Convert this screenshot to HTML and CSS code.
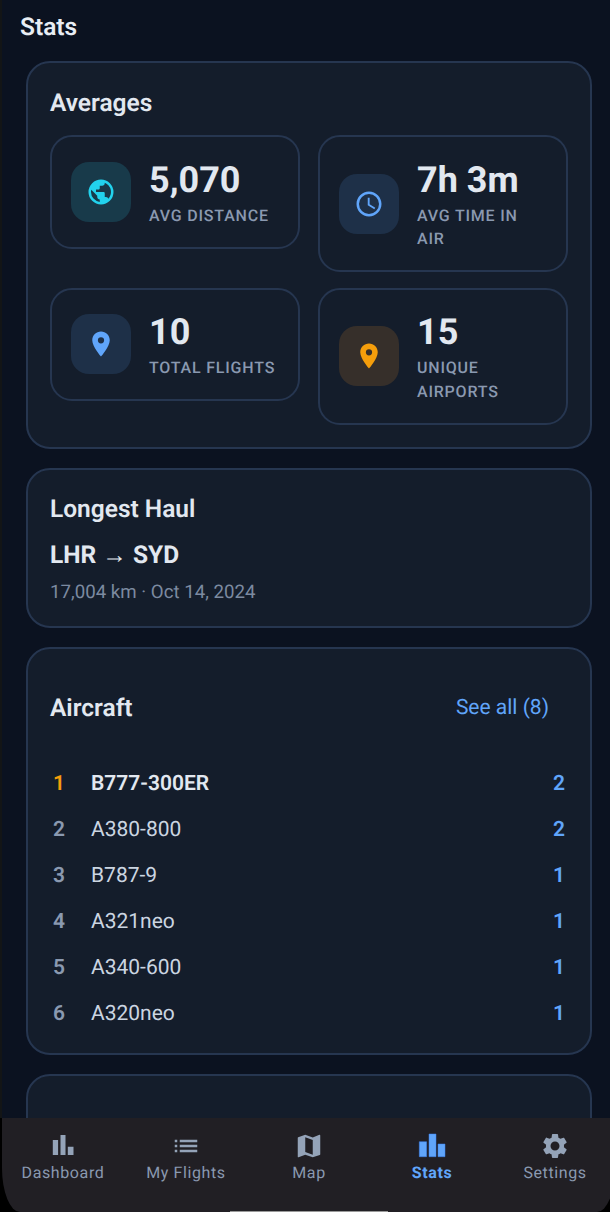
FILE: index.html
```html
<!DOCTYPE html>
<html lang="en">
<head>
<meta charset="utf-8">
<title>Stats</title>
<link rel="stylesheet" href="styles.css">
</head>
<body>
<div class="screen">
  <main class="content">
    <h1 class="page-title">Stats</h1>
    <section class="card averages">
      <h2 class="card-title">Averages</h2>
      <div class="tiles">
        <div class="tile">
          <div class="tile-icon cyan">
            <svg viewBox="0 0 24 24" width="30" height="30"><path fill="#22d3ee" d="M12 2a10 10 0 1 0 0 20 10 10 0 0 0 0-20zm-1 17.930A8 8 0 0 1 4 12c0-.62.08-1.210.21-1.790L9 15v1c0 1.100.9 2 2 2v1.930zm6.900-2.540A2 2 0 0 0 16 16h-1v-3c0-.55-.45-1-1-1H8v-2h2c.55 0 1-.45 1-1V7h2c1.100 0 2-.9 2-2v-.41a8 8 0 0 1 2.900 12.800z"/></svg>
          </div>
          <div class="tile-text"><div class="value">5,070</div><div class="label">AVG DISTANCE</div></div>
        </div>
        <div class="tile">
          <div class="tile-icon blue">
            <svg viewBox="0 0 24 24" width="30" height="30"><path fill="#60a5fa" d="M11.990 2C6.470 2 2 6.480 2 12s4.470 10 9.990 10C17.520 22 22 17.520 22 12S17.520 2 11.990 2zM12 20a8 8 0 1 1 0-16 8 8 0 0 1 0 16zm.5-13H11v6l5.250 3.150.75-1.230-4.500-2.670z"/></svg>
          </div>
          <div class="tile-text"><div class="value">7h 3m</div><div class="label">AVG TIME IN AIR</div></div>
        </div>
        <div class="tile">
          <div class="tile-icon blue">
            <svg viewBox="0 0 24 24" width="30" height="30"><path fill="#60a5fa" d="M12 2C8.130 2 5 5.130 5 9c0 5.250 7 13 7 13s7-7.750 7-13c0-3.870-3.130-7-7-7zm0 9.500a2.500 2.500 0 1 1 0-5 2.500 2.500 0 0 1 0 5z"/></svg>
          </div>
          <div class="tile-text"><div class="value">10</div><div class="label">TOTAL FLIGHTS</div></div>
        </div>
        <div class="tile">
          <div class="tile-icon amber">
            <svg viewBox="0 0 24 24" width="30" height="30"><path fill="#f59e0b" d="M12 2C8.130 2 5 5.130 5 9c0 5.250 7 13 7 13s7-7.750 7-13c0-3.870-3.130-7-7-7zm0 9.500a2.500 2.500 0 1 1 0-5 2.500 2.500 0 0 1 0 5z"/></svg>
          </div>
          <div class="tile-text"><div class="value">15</div><div class="label">UNIQUE AIRPORTS</div></div>
        </div>
      </div>
    </section>
    <section class="card haul">
      <h2 class="card-title">Longest Haul</h2>
      <div class="route">LHR → SYD</div>
      <div class="route-meta">17,004 km · Oct 14, 2024</div>
    </section>
    <section class="card aircraft">
      <div class="aircraft-head">
        <h2 class="card-title">Aircraft</h2>
        <span class="see-all">See all (8)</span>
      </div>
      <ol class="rank-list">
        <li class="rank-row top"><span class="rank">1</span><span class="name">B777-300ER</span><span class="count">2</span></li>
        <li class="rank-row"><span class="rank">2</span><span class="name">A380-800</span><span class="count">2</span></li>
        <li class="rank-row"><span class="rank">3</span><span class="name">B787-9</span><span class="count">1</span></li>
        <li class="rank-row"><span class="rank">4</span><span class="name">A321neo</span><span class="count">1</span></li>
        <li class="rank-row"><span class="rank">5</span><span class="name">A340-600</span><span class="count">1</span></li>
        <li class="rank-row"><span class="rank">6</span><span class="name">A320neo</span><span class="count">1</span></li>
      </ol>
    </section>
    <section class="card stub"></section>
  </main>
  <footer class="tabbar-wrap">
    <nav class="tabbar">
      <div class="tab">
        <svg viewBox="0 0 30 30" width="30" height="30"><path fill="#94a3b8" d="M4.800 9h5.300v15H4.800zM12.500 4h5v20h-5zM19.800 15.700h5.700V24h-5.700z"/></svg>
        <span class="tab-label">Dashboard</span>
      </div>
      <div class="tab">
        <svg viewBox="0 0 24 24" width="30" height="30"><path fill="#94a3b8" d="M3 13h2v-2H3v2zm0 4h2v-2H3v2zm0-8h2V7H3v2zm4 4h14v-2H7v2zm0 4h14v-2H7v2zM7 7v2h14V7H7z"/></svg>
        <span class="tab-label">My Flights</span>
      </div>
      <div class="tab">
        <svg viewBox="0 0 24 24" width="30" height="30"><path fill="#94a3b8" d="M20.500 3l-.16.03L15 5.100 9 3 3.360 4.900c-.21.07-.36.25-.36.48V20.500c0 .28.22.5.5.5l.16-.03L9 18.900l6 2.100 5.640-1.900c.21-.07.36-.25.36-.48V3.500c0-.28-.22-.5-.5-.5zM15 19l-6-2.110V5l6 2.110V19z"/></svg>
        <span class="tab-label">Map</span>
      </div>
      <div class="tab active">
        <svg viewBox="0 0 30 30" width="30" height="30"><path fill="#60a5fa" stroke="#3b82f6" stroke-width=".5" d="M2.300 10.700h7.300v15H2.300zM12 3h7v22.700h-7zM21 13h7v12.700h-7z"/></svg>
        <span class="tab-label">Stats</span>
      </div>
      <div class="tab">
        <svg viewBox="0 0 24 24" width="30" height="30"><path fill="#94a3b8" d="M19.140 12.940c.04-.3.06-.61.06-.94 0-.32-.02-.64-.07-.94l2.030-1.580c.18-.14.23-.41.12-.61l-1.920-3.320c-.12-.22-.37-.29-.59-.22l-2.390.96c-.5-.38-1.030-.7-1.620-.94l-.36-2.540c-.04-.24-.24-.41-.48-.41h-3.840c-.24 0-.43.17-.47.41l-.36 2.540c-.59.24-1.130.57-1.620.94l-2.390-.96c-.22-.08-.47 0-.59.22L2.740 8.870c-.12.21-.08.47.12.61l2.030 1.580c-.05.3-.09.63-.09.94s.02.64.07.94l-2.030 1.580c-.18.14-.23.41-.12.61l1.920 3.320c.12.22.37.29.59.22l2.390-.96c.5.38 1.030.7 1.620.94l.36 2.54c.05.24.24.41.48.41h3.840c.24 0 .44-.17.47-.41l.36-2.540c.59-.24 1.130-.56 1.620-.94l2.390.96c.22.08.47 0 .59-.22l1.920-3.320c.12-.22.07-.47-.12-.61l-2.010-1.580zM12 15.600c-1.980 0-3.600-1.620-3.600-3.600s1.620-3.600 3.600-3.600 3.600 1.620 3.600 3.600-1.620 3.600-3.600 3.600z"/></svg>
        <span class="tab-label">Settings</span>
      </div>
    </nav>
    <div class="home-indicator"></div>
  </footer>
</div>
</body>
</html>
```
FILE: styles.css
```css
* { box-sizing: border-box; }
html, body { margin: 0; padding: 0; height: 100%; background: #000; }
body { font-family: Roboto, "Liberation Sans", sans-serif; color: #e2e8f0; text-rendering: geometricPrecision; }
.screen {
  width: 610px; height: 1212px; overflow: hidden; display: flex; flex-direction: column;
  background: linear-gradient(90deg, #131516 2px, #0b1220 2px); position: relative;
}
.content { flex: 1; min-height: 0; overflow: hidden; padding: 0 18px 0 26px; }
.page-title { margin: 0 0 0 -6px; padding-top: 13px; height: 61px; font-size: 24.5px; line-height: 28px; font-weight: 600; color: #e8edf4; }
.card {
  background: #141d2b; border: 2px solid #263650; border-radius: 24px; padding: 22px; margin-bottom: 19px;
}
.card-title { margin: 0; font-size: 24.500px; line-height: 32px; font-weight: 600; color: #e2e8f0; }
.averages { height: 388px; padding-top: 24px; }
.tiles { display: grid; grid-template-columns: 250px 250px; column-gap: 18px; row-gap: 15.500px; align-items: start; margin-top: 16px; }
.tile {
  display: flex; align-items: center; gap: 18px; padding: 19.500px 19px;
  border: 2px solid #263650; border-radius: 22px;
}
.tile-icon { width: 60px; height: 60px; border-radius: 18px; display: flex; align-items: center; justify-content: center; flex: none; }
.cyan { background: #183a4a; }
.blue { background: #1e3048; }
.amber { background: #362f2a; }
.value { font-size: 36px; line-height: 47px; font-weight: 700; color: #e2e8f0; }
.label { font-size: 16px; line-height: 23.500px; letter-spacing: .8px; color: #8a99b0; font-weight: 500; }
.haul { height: 160px; padding-top: 23px; }
.route { font-size: 24.500px; line-height: 30px; font-weight: 700; margin-top: 15px; color: #e2e8f0; }
.route-meta { font-size: 18.700px; line-height: 24px; color: #7c8aa0; margin-top: 10px; }
.aircraft { height: 408px; padding: 0 25px 0 22px; }
.aircraft-head { display: flex; justify-content: space-between; align-items: center; height: 117px; padding-right: 16px; }
.see-all { font-size: 21px; color: #60a5fa; }
.rank-list { list-style: none; margin: -5px 0 0; padding: 0; }
.rank-row { display: flex; align-items: center; height: 46px; font-size: 21px; color: #cbd5e1; }
.rank { width: 41px; font-weight: 600; color: #8a99b0; padding-left: 3px; }
.name { flex: 1; }
.count { font-weight: 600; color: #60a5fa; }
.top .rank { color: #f59e0b; }
.top .name { font-weight: 600; color: #e2e8f0; }
.stub { height: 200px; margin-bottom: 0; }
.tabbar-wrap { position: absolute; left: 0; bottom: 0; width: 610px; height: 94px; padding-left: 1.500px; background: #000; }
.tabbar {
  height: 100%; width: 613.500px; background: #211f24;
  border-radius: 0 0 18px 18px / 0 0 44px 44px; display: flex; padding-top: 13px;
}
.tab { flex: 0 0 123px; display: flex; flex-direction: column; align-items: center; }
.tab-label { font-size: 16px; line-height: 24px; letter-spacing: .6px; color: #8a99b0; white-space: nowrap; }
.active .tab-label { color: #60a5fa; font-weight: 700; }
.home-indicator { position: absolute; left: 230px; bottom: 0; width: 158px; height: 1px; background: #999; }
```
